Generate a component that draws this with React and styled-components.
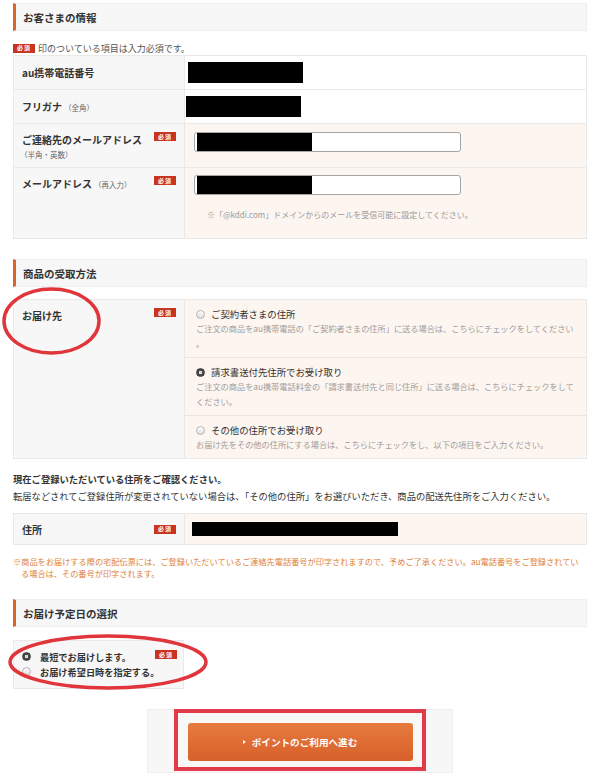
import React from 'react';
import styled, {createGlobalStyle, css} from 'styled-components';

const GlobalStyle = createGlobalStyle`
  html, body {
    margin: 0;
    padding: 0;
    background: #fff;
  }
  body {
    font-family: "Noto Sans CJK JP", "Noto Sans", sans-serif;
    color: #333;
  }
`;

const Page = styled.div`
  width: 600px;
  box-sizing: border-box;
  padding: 3px 13px 0 13px;
`;

const SectionHeader = styled.h2`
  margin: ${props => props.$top || 0}px 0 0 0;
  height: 28px;
  box-sizing: border-box;
  display: flex;
  align-items: center;
  padding-left: 7px;
  background: #f7f7f7;
  border: 1px solid #eeeeee;
  border-left: 3px solid #d8652c;
  font-size: 10.5px;
  font-weight: 700;
  color: #333;
`;

const RequiredNote = styled.p`
  margin: 10px 0 0 0;
  height: 14px;
  display: flex;
  align-items: center;
  gap: 3px;
  font-size: 9px;
  color: #555;
`;

const Badge = styled.span`
  display: inline-flex;
  align-items: center;
  justify-content: center;
  flex: none;
  width: 22px;
  height: 9px;
  background: #c9341f;
  color: #fff;
  font-size: 6px;
  font-weight: 700;
  letter-spacing: 1px;
  line-height: 1;
`;

const Table = styled.div`
  margin-top: ${props => props.$top || 0}px;
  border: 1px solid #e9e9e9;
  border-bottom: none;
`;

const Row = styled.div`
  display: grid;
  grid-template-columns: 171px 1fr;
  min-height: ${props => props.$h}px;
  box-sizing: border-box;
  border-bottom: 1px solid #e9e9e9;
`;

const LabelCell = styled.div`
  position: relative;
  display: flex;
  justify-content: space-between;
  align-items: ${props => (props.$top ? 'flex-start' : 'center')};
  padding: ${props => (props.$top ? '8px 8px 0 8px' : '0 8px')};
  background: #f7f7f7;
  border-right: 1px solid #e9e9e9;
`;

const LabelText = styled.div`
  font-size: 10px;
  font-weight: 700;
  color: #333;
  line-height: 15px;
  padding-top: ${props => (props.$top ? 8 : 0)}px;
`;

const LabelSub = styled.span`
  font-size: 7.5px;
  font-weight: 400;
  color: #666;
  margin-left: 2px;
  ${props => props.$block && css`
    display: block;
    margin-left: -2px;
  `}
`;

const ValueCell = styled.div`
  background: ${props => (props.$tint ? '#fdf5ef' : '#fff')};
  padding: ${props => props.$pad || '0'};
  display: flex;
  flex-direction: column;
  justify-content: ${props => (props.$center ? 'center' : 'flex-start')};
`;

const Redacted = styled.div`
  width: ${props => props.$w}px;
  height: ${props => props.$h || 21}px;
  margin-left: ${props => props.$left || 0}px;
  background: #000;
  flex: none;
`;

const TextInput = styled.div`
  width: 267px;
  height: 20px;
  box-sizing: border-box;
  border: 1px solid #a5a5a5;
  border-radius: 3px;
  background: #fff;
  display: flex;
  align-items: stretch;
  padding-left: 2px;
  overflow: hidden;
`;

const MailNote = styled.p`
  margin: 14px 0 0 13px;
  font-size: 8px;
  color: #9a9a9a;
`;

const Option = styled.div`
  padding: 7px 11px 6px 11px;
  border-top: ${props => (props.$first ? 'none' : '1px solid #ede4dd')};
`;

const OptionTitle = styled.div`
  display: flex;
  align-items: center;
  gap: 6px;
  height: 14px;
  font-size: 9.4px;
  color: #333;
`;

const OptionDesc = styled.div`
  font-size: 8.2px;
  line-height: 15px;
  color: #9d9d9d;
  white-space: nowrap;
`;

const Radio = styled.span`
  display: inline-block;
  flex: none;
  width: 9px;
  height: 9px;
  box-sizing: border-box;
  border-radius: 50%;
  ${props => props.$checked
    ? css`
      background: radial-gradient(circle, #d8d8d8 0 1.6px, #4a4a4a 2px);
      border: 1px solid #3a3a3a;
    `
    : css`
      background: linear-gradient(#ffffff, #dcdcdc);
      border: 1px solid #b4b4b4;
    `}
`;

const ConfirmBlock = styled.div`
  margin-top: 12px;
  font-size: 9.3px;
  line-height: 17px;
  color: #333;
`;

const ConfirmTitle = styled.div`
  font-weight: 700;
`;

const OrangeNote = styled.p`
  margin: 10px 0 0 0;
  font-size: 8.2px;
  line-height: 12px;
  color: #e07f3d;
  white-space: nowrap;
`;

const NoteIndent = styled.span`
  display: block;
  padding-left: 8px;
`;

const DeliveryBox = styled.div`
  position: relative;
  margin-top: 13px;
  width: 171px;
  height: 49px;
  box-sizing: border-box;
  background: #f7f7f7;
  border: 1px solid #e9e9e9;
  padding: 8px 0 0 8px;
`;

const DeliveryBadge = styled(Badge)`
  position: absolute;
  top: 9px;
  right: 6px;
`;

const DeliveryOption = styled.div`
  display: flex;
  align-items: center;
  gap: 9px;
  height: 15px;
  font-size: 9.2px;
  font-weight: 700;
  color: #333;
`;

const ButtonPanel = styled.div`
  position: relative;
  margin: 20px auto 0 auto;
  width: 306px;
  height: 64px;
  box-sizing: border-box;
  background: #f7f7f7;
  border: 1px solid #eeeeee;
  display: flex;
  justify-content: center;
  padding-top: 13px;
`;

const NextButton = styled.button`
  width: 225px;
  height: 38px;
  border: none;
  border-radius: 3px;
  background: linear-gradient(#e67a3f, #d8602a);
  color: #fff;
  font-family: inherit;
  font-size: 9.6px;
  font-weight: 700;
  display: flex;
  align-items: center;
  justify-content: center;
  gap: 6px;
  cursor: pointer;
`;

const Arrow = styled.span`
  width: 0;
  height: 0;
  border-top: 2.5px solid transparent;
  border-bottom: 2.5px solid transparent;
  border-left: 3.5px solid #fff;
`;

const Markup = styled.svg`
  position: absolute;
  left: ${props => props.$x}px;
  top: ${props => props.$y}px;
  overflow: visible;
  pointer-events: none;
`;

const HighlightFrame = styled.div`
  position: absolute;
  left: 26px;
  top: -1px;
  width: 252px;
  height: 62px;
  box-sizing: border-box;
  border: 4px solid #e23a48;
  pointer-events: none;
`;

const Ring = ({x, y, w, h}) => (
  <Markup $x={x} $y={y} width={w} height={h} viewBox={`0 0 ${w} ${h}`}>
    <ellipse cx={w / 2} cy={h / 2} rx={w / 2 - 2} ry={h / 2 - 2}
      fill="none" stroke="#e0353b" strokeWidth="3.5"/>
  </Markup>
);

const shippingOptions = [
  {
    title: 'ご契約者さまの住所',
    lines: ['ご注文の商品をau携帯電話の「ご契約者さまの住所」に送る場合は、こちらにチェックをしてください', '。']
  },
  {
    title: '請求書送付先住所でお受け取り',
    checked: true,
    lines: ['ご注文の商品をau携帯電話料金の「請求書送付先と同じ住所」に送る場合は、こちらにチェックをして', 'ください。']
  },
  {
    title: 'その他の住所でお受け取り',
    lines: ['お届け先をその他の住所にする場合は、こちらにチェックをし、以下の項目をご入力ください。']
  }
];

export default function App() {
  return (
    <Page>
      <GlobalStyle/>

      <SectionHeader>お客さまの情報</SectionHeader>
      <RequiredNote><Badge>必須</Badge>印のついている項目は入力必須です。</RequiredNote>

      <Table>
        <Row $h={34}>
          <LabelCell><LabelText>au携帯電話番号</LabelText></LabelCell>
          <ValueCell $center><Redacted $w={115} $left={3}/></ValueCell>
        </Row>
        <Row $h={34}>
          <LabelCell><LabelText>フリガナ<LabelSub>（全角）</LabelSub></LabelText></LabelCell>
          <ValueCell $center><Redacted $w={115} $left={1}/></ValueCell>
        </Row>
        <Row $h={44}>
          <LabelCell $top>
            <LabelText>ご連絡先のメールアドレス<LabelSub $block>（半角・英数）</LabelSub></LabelText>
            <Badge>必須</Badge>
          </LabelCell>
          <ValueCell $tint $pad="8px 0 0 9px">
            <TextInput><Redacted $w={115} $h={18}/></TextInput>
          </ValueCell>
        </Row>
        <Row $h={71}>
          <LabelCell $top>
            <LabelText>メールアドレス<LabelSub>（再入力）</LabelSub></LabelText>
            <Badge>必須</Badge>
          </LabelCell>
          <ValueCell $tint $pad="7px 0 0 9px">
            <TextInput><Redacted $w={115} $h={18}/></TextInput>
            <MailNote>※「@kddi.com」ドメインからのメールを受信可能に設定してください。</MailNote>
          </ValueCell>
        </Row>
      </Table>

      <SectionHeader $top={20}>商品の受取方法</SectionHeader>
      <Table $top={12}>
        <Row>
          <LabelCell $top>
            <LabelText>お届け先</LabelText>
            <Badge>必須</Badge>
            <Ring x={-12} y={-13} w={99} h={68}/>
          </LabelCell>
          <ValueCell $tint>
            {shippingOptions.map((opt, index) => (
              <Option key={opt.title} $first={index === 0}>
                <OptionTitle><Radio $checked={opt.checked}/>{opt.title}</OptionTitle>
                {opt.lines.map((line, i) => (
                  <OptionDesc key={i}>{line}</OptionDesc>
                ))}
              </Option>
            ))}
          </ValueCell>
        </Row>
      </Table>

      <ConfirmBlock>
        <ConfirmTitle>現在ご登録いただいている住所をご確認ください。</ConfirmTitle>
        <div>転居などされてご登録住所が変更されていない場合は、「その他の住所」をお選びいただき、商品の配送先住所をご入力ください。</div>
      </ConfirmBlock>

      <Table $top={8}>
        <Row $h={31}>
          <LabelCell>
            <LabelText>住所</LabelText>
            <Badge>必須</Badge>
          </LabelCell>
          <ValueCell $tint $center><Redacted $w={206} $h={14} $left={7}/></ValueCell>
        </Row>
      </Table>

      <OrangeNote>
        ※商品をお届けする際の宅配伝票には、ご登録いただいているご連絡先電話番号が印字されますので、予めご了承ください。au電話番号をご登録されてい
        <NoteIndent>る場合は、その番号が印字されます。</NoteIndent>
      </OrangeNote>

      <SectionHeader $top={20}>お届け予定日の選択</SectionHeader>
      <DeliveryBox>
        <DeliveryBadge>必須</DeliveryBadge>
        <DeliveryOption><Radio $checked/>最短でお届けします。</DeliveryOption>
        <DeliveryOption><Radio/>お届け希望日時を指定する。</DeliveryOption>
        <Ring x={-6} y={-7} w={200} h={56}/>
      </DeliveryBox>

      <ButtonPanel>
        <NextButton type="button"><Arrow/>ポイントのご利用へ進む</NextButton>
        <HighlightFrame/>
      </ButtonPanel>
    </Page>
  );
}
